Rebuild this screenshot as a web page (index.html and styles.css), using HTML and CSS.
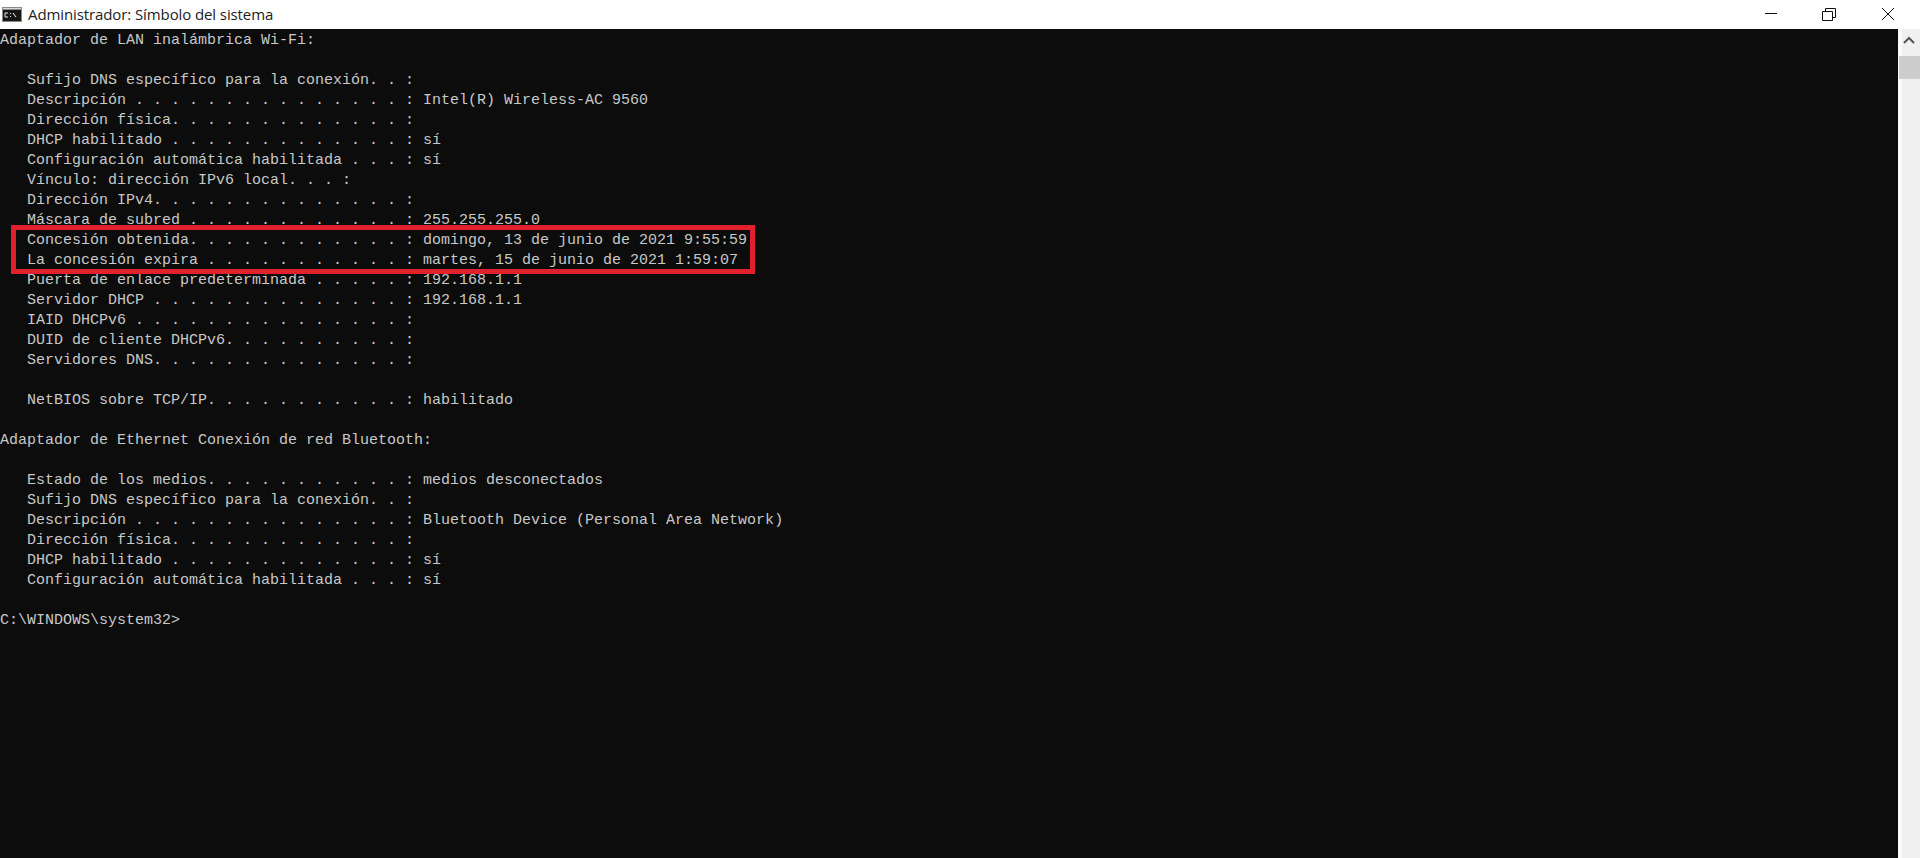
FILE: index.html
```html
<!DOCTYPE html>
<html lang="es">
<head>
<meta charset="utf-8">
<title>Administrador: Símbolo del sistema</title>
<link rel="stylesheet" href="styles.css">
</head>
<body>
<div class="window">
  <header class="titlebar">
    <svg class="app-icon" width="20" height="15" viewBox="0 0 20 15">
      <rect width="20" height="15" fill="#8a8a8a"/>
      <rect x="1" y="3" width="18" height="11" fill="#161616"/>
      <rect x="1" y="1" width="18" height="1" fill="#d8d8d8"/>
      <path d="M6 6H3V10H6M8.500 6V7M8.500 9V10M11 6L14 10M11 6.500H12M13 9.500H14" stroke="#e8e8e8" fill="none"/>
    </svg>
    <span class="title">Administrador: Símbolo del sistema</span>
    <div class="controls">
      <svg class="ctl" width="46" height="29" viewBox="0 0 46 29"><path d="M16 13.500H28" stroke="#111"/></svg>
      <svg class="ctl" width="46" height="29" viewBox="0 0 46 29"><path d="M15.500 11.500H25.500V20.500H15.500ZM18.500 11V8.500H28.500V17.500H26" stroke="#111" fill="none"/></svg>
      <svg class="ctl" width="46" height="29" viewBox="0 0 46 29"><path d="M17 8L29 20M29 8L17 20" stroke="#111" fill="none"/></svg>
    </div>
  </header>
  <div class="body">
    <main class="console">
<pre class="output">Adaptador de LAN inalámbrica Wi-Fi:

   Sufijo DNS específico para la conexión. . :
   Descripción . . . . . . . . . . . . . . . : Intel(R) Wireless-AC 9560
   Dirección física. . . . . . . . . . . . . :
   DHCP habilitado . . . . . . . . . . . . . : sí
   Configuración automática habilitada . . . : sí
   Vínculo: dirección IPv6 local. . . :
   Dirección IPv4. . . . . . . . . . . . . . :
   Máscara de subred . . . . . . . . . . . . : 255.255.255.0
   Concesión obtenida. . . . . . . . . . . . : domingo, 13 de junio de 2021 9:55:59
   La concesión expira . . . . . . . . . . . : martes, 15 de junio de 2021 1:59:07
   Puerta de enlace predeterminada . . . . . : 192.168.1.1
   Servidor DHCP . . . . . . . . . . . . . . : 192.168.1.1
   IAID DHCPv6 . . . . . . . . . . . . . . . :
   DUID de cliente DHCPv6. . . . . . . . . . :
   Servidores DNS. . . . . . . . . . . . . . :

   NetBIOS sobre TCP/IP. . . . . . . . . . . : habilitado

Adaptador de Ethernet Conexión de red Bluetooth:

   Estado de los medios. . . . . . . . . . . : medios desconectados
   Sufijo DNS específico para la conexión. . :
   Descripción . . . . . . . . . . . . . . . : Bluetooth Device (Personal Area Network)
   Dirección física. . . . . . . . . . . . . :
   DHCP habilitado . . . . . . . . . . . . . : sí
   Configuración automática habilitada . . . : sí

C:\WINDOWS\system32&gt;</pre>
      <div class="highlight"></div>
    </main>
    <aside class="scrollbar">
      <svg class="arrow" width="18" height="16" viewBox="0 0 18 16"><path d="M4 11L9 6L14 11" stroke="#555" stroke-width="2" fill="none"/></svg>
      <div class="thumb"></div>
    </aside>
  </div>
</div>
</body>
</html>
```
FILE: styles.css
```css
* { box-sizing: border-box; }
html, body { margin: 0; height: 100%; overflow: hidden; }
.window { height: 858px; display: flex; flex-direction: column; background: #fff; }
.titlebar {
  height: 29px; flex: none; display: flex; align-items: center;
  padding-left: 2px; background: #fff;
}
.app-icon { flex: none; margin-right: 6px; margin-top: 0; }
.title {
  font: 15px/29px "Open Sans", "Noto Sans", sans-serif;
  letter-spacing: -0.1px; color: #222;
}
.controls { margin-left: auto; display: flex; padding-right: 9px; }
.ctl { display: block; margin-left: 12px; }
.body { flex: 1; display: flex; min-height: 0; }
.console { flex: 1; position: relative; background: #0c0c0c; overflow: hidden; }
.output {
  margin: 0; padding-top: 2px;
  font: 15px/20px "Liberation Mono", monospace;
  color: #c8c8c8;
  white-space: pre;
}
.highlight {
  position: absolute; left: 11px; top: 196px; width: 744px; height: 49px;
  border: 5px solid #e0202c;
}
.scrollbar { width: 22px; flex: none; background: #f0f0f0; border-left: 4px solid #fbfbfb; }
.arrow { display: block; margin: 3px 0 0 -2px; }
.thumb { height: 23px; margin: 8px 0 0 -3px; background: #cdcdcd; }
```
